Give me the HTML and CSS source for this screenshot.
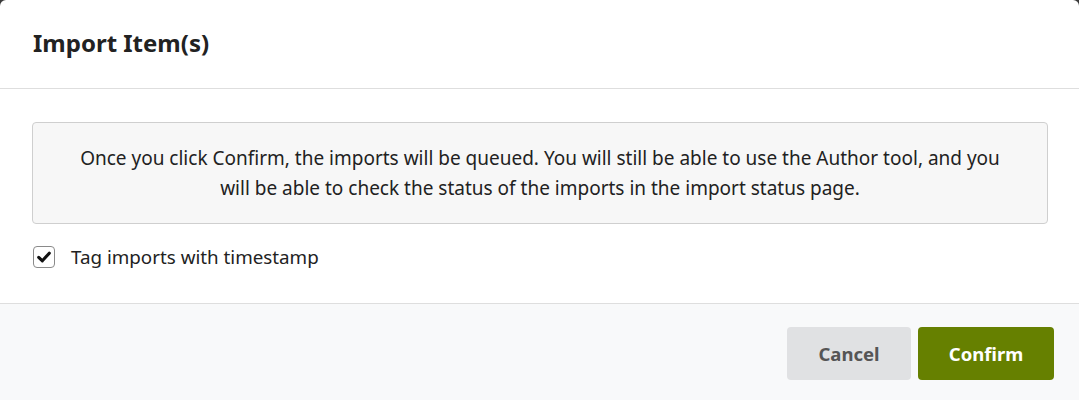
FILE: index.html
```html
<!DOCTYPE html>
<html lang="en">
<head>
<meta charset="utf-8">
<title>Import Item(s)</title>
<link rel="stylesheet" href="styles.css">
</head>
<body>
<div class="modal">
  <div class="modal-header">
    <h2 class="modal-title">Import Item(s)</h2>
  </div>
  <div class="modal-body">
    <div class="notice">Once you click Confirm, the imports will be queued. You will still be able to use the Author tool, and you will be able to check the status of the imports in the import status page.</div>
    <label class="check-row">
      <span class="checkbox">
        <svg viewBox="0 0 22 22" width="22" height="22"><path d="M5.2 11.4 L9.2 15.2 L16.8 6.8" fill="none" stroke="#111" stroke-width="3.4" stroke-linecap="round" stroke-linejoin="round"/></svg>
      </span>
      <span class="check-label">Tag imports with timestamp</span>
    </label>
  </div>
  <div class="modal-footer">
    <button class="btn btn-cancel">Cancel</button>
    <button class="btn btn-confirm">Confirm</button>
  </div>
</div>
</body>
</html>
```
FILE: styles.css
```css
* { box-sizing: border-box; }
html, body { margin: 0; padding: 0; }
body {
  background: #3a3a3a;
  font-family: "Noto Sans", "Open Sans", sans-serif;
  color: #222;
  width: 1079px;
  height: 400px;
  overflow: hidden;
}
.modal {
  background: #fff;
  border-radius: 6px 6px 0 0;
  width: 1079px;
  height: 420px;
  display: flex;
  flex-direction: column;
}
.modal-header {
  height: 89px;
  border-bottom: 1px solid #dedede;
  display: flex;
  align-items: center;
  padding: 0 33px 3px;
}
.modal-title {
  margin: 0;
  font-size: 24px;
  font-weight: 700;
  color: #222;
  line-height: 1;
}
.modal-body {
  padding: 33px 31px 0 32px;
  height: 214px;
}
.notice {
  background: #f7f7f7;
  border: 1px solid #cfcfcf;
  border-radius: 4px;
  padding: 20px 42px;
  text-align: center;
  font-size: 19px;
  line-height: 30px;
  color: #222;
}
.check-row {
  display: flex;
  align-items: center;
  gap: 16px;
  margin-top: 22px;
  padding-left: 1px;
}
.checkbox {
  width: 22px;
  height: 22px;
  border: 1px solid #8a8a8a;
  border-radius: 4px;
  background: #fff;
  display: flex;
  align-items: center;
  justify-content: center;
  overflow: hidden;
}
.checkbox svg { display: block; }
.check-label {
  font-size: 18.8px;
  line-height: 22px;
  color: #222;
}
.modal-footer {
  flex: 1;
  background: #f8f9fa;
  border-top: 1px solid #dedede;
  display: flex;
  justify-content: flex-end;
  align-items: flex-start;
  gap: 7px;
  padding: 23px 25px 0 0;
}
.btn {
  height: 53px;
  border: none;
  border-radius: 4px;
  font-family: inherit;
  font-size: 18.5px;
  font-weight: 700;
  cursor: pointer;
}
.btn-cancel {
  width: 124px;
  background: #e0e1e3;
  color: #555;
}
.btn-confirm {
  width: 136px;
  background: #668000;
  color: #fff;
}
```
